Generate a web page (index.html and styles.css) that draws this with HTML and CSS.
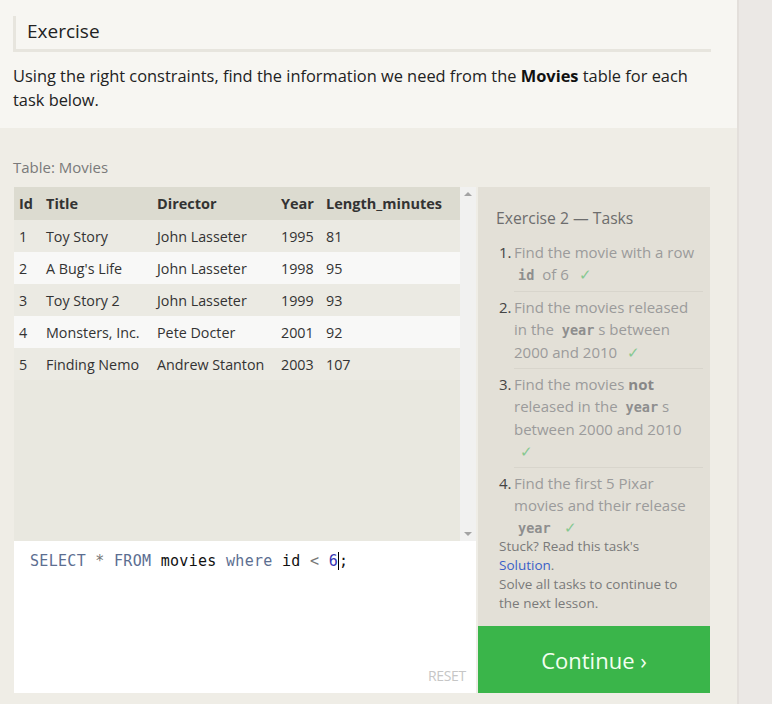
FILE: index.html
```html
<!DOCTYPE html>
<html>
<head>
<meta charset="utf-8">
<link rel="stylesheet" href="styles.css">
</head>
<body>
<div class="page">
  <div class="main">
    <section class="intro">
      <h2 class="ex-title">Exercise</h2>
      <p class="ex-desc">Using the right constraints, find the information we need from the <strong>Movies</strong> table for each task below.</p>
    </section>
    <section class="work">
      <div class="table-label">Table: Movies</div>
      <div class="workspace">
        <div class="left">
          <div class="table-box">
            <div class="table">
              <div class="row head"><span>Id</span><span>Title</span><span>Director</span><span>Year</span><span>Length_minutes</span></div>
              <div class="row odd"><span>1</span><span>Toy Story</span><span>John Lasseter</span><span>1995</span><span>81</span></div>
              <div class="row even"><span>2</span><span>A Bug's Life</span><span>John Lasseter</span><span>1998</span><span>95</span></div>
              <div class="row odd"><span>3</span><span>Toy Story 2</span><span>John Lasseter</span><span>1999</span><span>93</span></div>
              <div class="row even"><span>4</span><span>Monsters, Inc.</span><span>Pete Docter</span><span>2001</span><span>92</span></div>
              <div class="row odd"><span>5</span><span>Finding Nemo</span><span>Andrew Stanton</span><span>2003</span><span>107</span></div>
            </div>
            <div class="scrollbar">
              <span class="arrow up"></span>
              <span class="arrow down"></span>
            </div>
          </div>
          <div class="editor">
            <div class="code"><span class="kw">SELECT</span> <span class="op">*</span> <span class="kw">FROM</span> movies <span class="kw">where</span> id <span class="op">&lt;</span> <span class="num">6</span><span class="cursor"></span>;</div>
            <div class="reset">RESET</div>
          </div>
        </div>
        <div class="right">
          <div class="tasks">
            <div class="tasks-title">Exercise 2 — Tasks</div>
            <ol class="task-list">
              <li><span class="n">1.</span><span class="t">Find the movie with a row <code>id</code> of 6 <span class="check">✓</span></span></li>
              <li><span class="n">2.</span><span class="t">Find the movies released in the <code>year</code>s between 2000 and 2010 <span class="check">✓</span></span></li>
              <li><span class="n">3.</span><span class="t">Find the movies <b>not</b> released in the <code>year</code>s between 2000 and 2010 <span class="check">✓</span></span></li>
              <li><span class="n">4.</span><span class="t">Find the first 5 Pixar movies and their release <code>year</code> <span class="check">✓</span></span></li>
            </ol>
            <div class="stuck">Stuck? Read this task's <a class="sol">Solution</a>.<br>Solve all tasks to continue to the next lesson.</div>
          </div>
          <div class="continue">Continue ›</div>
        </div>
      </div>
    </section>
  </div>
  <div class="edge"></div>
</div>
</body>
</html>
```
FILE: styles.css
```css
* { box-sizing: border-box; }
html, body { margin: 0; padding: 0; }
body {
  background: #ebe8e5;
  font-family: "Open Sans", "Noto Sans", sans-serif;
  color: #333;
  width: 772px;
  height: 704px;
  overflow: hidden;
}
.page { display: flex; height: 704px; }
.main { width: 737px; display: flex; flex-direction: column; }
.edge { width: 35px; background: #ebe8e5; border-left: 2px solid #e3dfdb; }
.intro {
  background: #f7f6f2;
  height: 128px;
  padding: 16px 26px 0 13px;
}
.ex-title {
  margin: 0;
  height: 36px;
  border-left: 3px solid #e7e5de;
  border-bottom: 3px solid #e7e5de;
  font-weight: 400;
  font-size: 19px;
  line-height: 30px;
  padding-left: 11px;
  color: #222;
}
.ex-desc {
  margin: 12px 0 0 0;
  font-size: 16.4px;
  line-height: 24px;
  color: #222;
  width: 698px;
}
.ex-desc strong { font-weight: 700; color: #111; }
.work {
  background: #efede6;
  flex: 1;
  padding: 28px 0 0 13px;
}
.table-label {
  font-size: 15px;
  color: #7a7a7a;
  line-height: 20px;
  height: 31px;
  padding-top: 1px;
}
.workspace { display: flex; gap: 2px; margin-left: 1px; }
.left { width: 462px; display: flex; flex-direction: column; }
.table-box {
  height: 354px;
  display: flex;
  background: #e9e8e0;
}
.table { width: 446px; }
.row {
  display: grid;
  grid-template-columns: 27px 111px 124px 45px 1fr;
  height: 32px;
  align-items: center;
  font-size: 14.3px;
  color: #333;
}
.row span { padding-left: 5px; white-space: nowrap; }
.row.head { height: 33px; background: #dcdbd0; font-weight: 700; font-size: 14.5px; color: #333; }
.row.odd { background: #ebeae3; }
.row.even { background: #f8f8f7; }
.scrollbar {
  width: 16px;
  background: #f1f1f0;
  display: flex;
  flex-direction: column;
  justify-content: space-between;
  align-items: center;
  padding: 5px 0;
}
.arrow { width: 0; height: 0; border-left: 4px solid transparent; border-right: 4px solid transparent; }
.arrow.up { border-bottom: 4px solid #a3a3a3; }
.arrow.down { border-top: 4px solid #a3a3a3; }
.editor {
  height: 152px;
  background: #fff;
  padding: 10px 10px 8px 16px;
  display: flex;
  flex-direction: column;
  justify-content: space-between;
}
.code {
  font-family: "DejaVu Sans Mono", monospace;
  font-size: 15px;
  line-height: 20px;
  color: #111;
  letter-spacing: 0.3px;
}
.kw { color: #5c6e91; }
.op { color: #777; }
.num { color: #3535b5; }
.cursor { display: inline-block; width: 1px; height: 18px; background: #000; vertical-align: -4px; }
.reset {
  align-self: flex-end;
  font-size: 14px;
  color: #c6c6c6;
  letter-spacing: -0.3px;
}
.right { width: 232px; display: flex; flex-direction: column; }
.tasks {
  height: 439px;
  background: #e3e0d7;
  padding: 19px 7px 0 18px;
}
.tasks-title {
  font-size: 15.7px;
  color: #6d6d6d;
  line-height: 22px;
  padding-top: 1px;
}
.task-list {
  list-style: none;
  margin: 12px 0 0 0;
  padding: 0;
}
.task-list li {
  display: flex;
  font-size: 15px;
  line-height: 22px;
  color: #9b9b9b;
}
.task-list .n { width: 15px; padding-left: 3px; color: #444; flex: none; box-sizing: content-box; }
.task-list .t { border-bottom: 1px solid #d8d5cc; padding-bottom: 5px; margin-bottom: 4px; flex: 1; }
.task-list li:last-child .t { border-bottom: none; padding-bottom: 0; margin-bottom: 0; }
.task-list code {
  font-family: "DejaVu Sans Mono", monospace;
  font-weight: 700;
  font-size: 13.5px;
  color: #8e8e8e;
  padding: 0 4px;
}
.task-list b { color: #888; }
.check { color: #86c891; margin-left: 6px; }
.stuck {
  font-size: 13.5px;
  line-height: 19px;
  color: #7a7a7a;
  margin-left: 3px;
  margin-top: -2px;
  width: 185px;
}
.sol { color: #3b5fc8; }
.continue {
  height: 67px;
  background: #3ab54a;
  color: #f2fff0;
  font-size: 22px;
  display: flex;
  align-items: center;
  justify-content: center;
}
```
